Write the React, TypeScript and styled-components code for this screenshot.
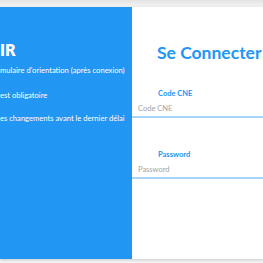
import React from "react";
import styled, { createGlobalStyle } from "styled-components";

const Global = createGlobalStyle`
  html, body { margin: 0; padding: 0; background: #ececec; }
  body { font-family: Lato, "Open Sans", sans-serif; overflow: hidden; }
  * { box-sizing: border-box; }
`;

const Page = styled.div`
  padding-top: 7px;
  width: 263px;
  height: 263px;
  background: linear-gradient(#e4e4e4, #f4f4f4 7px, #f4f4f4);
`;

const Card = styled.div`
  display: flex;
  height: 252px;
  box-shadow: 0 1px 3px rgba(0, 0, 0, 0.18);
  background: #fff;
`;

const Side = styled.section`
  width: 132px;
  flex: none;
  background: #2196f3;
  color: #fff;
  overflow: hidden;
  padding-top: 33px;
  display: flex;
  flex-direction: column;
`;

const SideTitle = styled.h2`
  margin: 0 0 6px 0;
  font-size: 16px;
  font-weight: 800;
  line-height: 20px;
  white-space: nowrap;
`;

const SideItem = styled.p<{ $gap?: number }>`
  margin: 0 0 ${(p) => p.$gap ?? 15}px 0;
  font-size: 7.6px;
  line-height: 9px;
  white-space: nowrap;
`;

const Main = styled.section`
  flex: 1;
  display: flex;
  flex-direction: column;
  padding-top: 35px;
`;

const Title = styled.h1`
  margin: 0 0 25px 25px;
  font-size: 17.5px;
  font-weight: 700;
  line-height: 22px;
  color: #2196f3;
  white-space: nowrap;
`;

const Label = styled.label`
  margin-left: 26px;
  font-size: 7.5px;
  font-weight: 700;
  line-height: 10px;
  color: #2196f3;
`;

const Input = styled.input`
  margin: 5px 0 0 0;
  width: 100%;
  border: none;
  border-bottom: 2px solid #a8d4f9;
  padding: 0 0 3px 6px;
  font-family: Lato, "Open Sans", sans-serif;
  font-size: 7.5px;
  line-height: 10px;
  height: 14px;
  outline: none;
  background: transparent;
  &::placeholder { color: #a3a3a3; opacity: 1; }
`;

const Field = styled.div<{ $gap?: number }>`
  display: flex;
  flex-direction: column;
  margin-bottom: ${(p) => p.$gap ?? 0}px;
`;

export default function App() {
  return (
    <>
      <Global />
      <Page>
        <Card>
          <Side>
            <SideTitle>IR</SideTitle>
            <SideItem $gap={16}>mulaire d'orientation (après conexion)</SideItem>
            <SideItem $gap={14}>est obligatoire</SideItem>
            <SideItem>es changements avant le dernier délai</SideItem>
          </Side>
          <Main>
            <Title>Se Connecter</Title>
            <Field $gap={32}>
              <Label>Code CNE</Label>
              <Input placeholder="Code CNE" />
            </Field>
            <Field>
              <Label>Password</Label>
              <Input type="password" placeholder="Password" />
            </Field>
          </Main>
        </Card>
      </Page>
    </>
  );
}
